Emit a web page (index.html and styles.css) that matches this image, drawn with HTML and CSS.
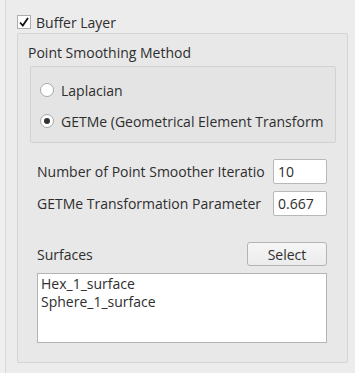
FILE: index.html
```html
<!DOCTYPE html>
<html lang="en">
  <head>
    <meta charset="UTF-8" />
    <title>Buffer Layer</title>
    <link rel="stylesheet" href="styles.css">
  </head>
  <body>
    <div class="page">
      <label class="check">
        <span class="check-box">
          <svg width="12" height="12" viewBox="0 0 12 12"><path d="M2 6.5 L4.8 9.5 L10 2" fill="none" stroke="#111" stroke-width="1.8"/></svg>
        </span>
        Buffer Layer
      </label>

      <div class="group">
        <div class="group-title">Point Smoothing Method</div>
        <div class="inner-group">
          <div class="radio"><span class="radio-dot"></span><span class="radio-text">Laplacian</span></div>
          <div class="radio"><span class="radio-dot checked"></span><span class="radio-text">GETMe (Geometrical Element Transform</span></div>
        </div>

        <div class="field first">
          <span class="field-label">Number of Point Smoother Iteratio</span>
          <span class="input">10</span>
        </div>
        <div class="field">
          <span class="field-label">GETMe Transformation Parameter</span>
          <span class="input">0.667</span>
        </div>

        <div class="surfaces-head">
          <span>Surfaces</span>
          <button class="btn">Select</button>
        </div>
        <div class="list">
          <div>Hex_1_surface</div>
          <div>Sphere_1_surface</div>
        </div>
      </div>
    </div>
  </body>
</html>
```

FILE: styles.css
```css
html, body {
  margin: 0;
  height: 100%;
}

body {
  background: #efefef;
  font-family: 'Open Sans', sans-serif;
  font-size: 14px;
  color: #2e2e2e;
}

.page {
  margin-left: 5px;
  border-left: 1px solid #d8d8d8;
  background: #ececec;
  height: 100%;
  box-sizing: border-box;
  padding: 14px 7px 0 11px;
}

.check {
  display: flex;
  align-items: center;
  gap: 5px;
  height: 16px;
}

.check-box {
  width: 12px;
  height: 12px;
  border: 1px solid #adadad;
  background: #fff;
  display: flex;
  align-items: center;
  justify-content: center;
}

.group {
  margin-top: 3px;
  border: 1px solid #d4d4d4;
  border-radius: 2px;
  background: #e8e8e8;
  height: 330px;
  box-sizing: border-box;
  padding: 0 11px 0 10px;
}

.group-title {
  margin-top: 9px;
  height: 19px;
  line-height: 19px;
}

.inner-group {
  margin: 4px 0 0 2px;
  border: 1px solid #d2d2d2;
  border-radius: 2px;
  background: #e4e4e4;
  height: 77px;
  box-sizing: border-box;
  padding: 14px 0 0 9px;
}

.radio {
  display: flex;
  align-items: center;
  gap: 7px;
  height: 18px;
  margin-bottom: 13px;
}

.radio-dot {
  width: 12px;
  height: 12px;
  border: 1px solid #a8a8a8;
  border-radius: 50%;
  background: #fff;
  flex-shrink: 0;
  display: flex;
  align-items: center;
  justify-content: center;
}

.radio-dot.checked::after {
  content: '';
  width: 6px;
  height: 6px;
  border-radius: 50%;
  background: #333;
}

.radio-text {
  white-space: nowrap;
  overflow: hidden;
  width: 266px;
}

.field {
  display: flex;
  align-items: center;
  gap: 7px;
  margin-left: 9px;
  margin-right: 9px;
  height: 25px;
  margin-top: 7px;
}

.field.first {
  margin-top: 16px;
}

.field-label {
  flex: 1;
  white-space: nowrap;
  overflow: hidden;
}

.input {
  width: 54px;
  height: 25px;
  box-sizing: border-box;
  border: 1px solid #b8b8b8;
  border-radius: 2px;
  background: #fff;
  padding: 0 4px;
  line-height: 23px;
}

.surfaces-head {
  display: flex;
  justify-content: space-between;
  align-items: center;
  margin: 26px 9px 0 9px;
  height: 24px;
}

.btn {
  width: 80px;
  height: 24px;
  border: 1px solid #b4b4b4;
  border-radius: 3px;
  background: linear-gradient(#f6f6f6, #ececec);
  font-family: inherit;
  font-size: 14px;
  color: #2e2e2e;
  padding: 0;
}

.list {
  margin: 7px 9px 0 9px;
  height: 70px;
  box-sizing: border-box;
  border: 1px solid #b4b4b4;
  background: #fff;
  padding: 1px 3px;
  line-height: 18px;
}
```
